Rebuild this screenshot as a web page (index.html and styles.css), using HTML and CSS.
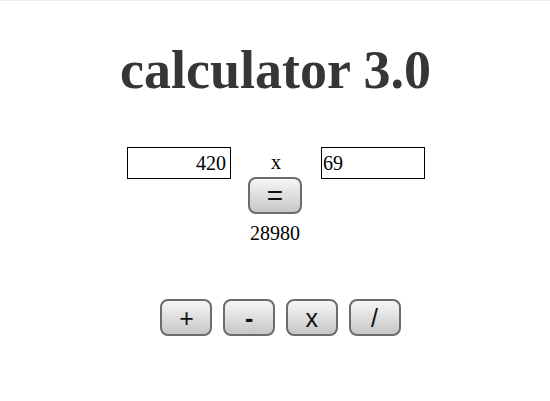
FILE: index.html
```html
<!DOCTYPE html>
<html>
<head>
<meta charset="utf-8">
<link rel="stylesheet" href="styles.css">
</head>
<body>
<div class="page">
  <h1 class="title">calculator 3.0</h1>
  <div class="operands">
    <input class="field field-left" type="text" value="420">
    <span class="op">x</span>
    <input class="field field-right" type="text" value="69">
  </div>
  <div class="equals-row">
    <button class="btn btn-equals">=</button>
  </div>
  <div class="result">28980</div>
  <div class="ops">
    <button class="btn btn-op">+</button>
    <button class="btn btn-op btn-minus">-</button>
    <button class="btn btn-op">x</button>
    <button class="btn btn-op">/</button>
  </div>
</div>
</body>
</html>
```

FILE: styles.css
```css
html, body {
  margin: 0;
  padding: 0;
  background: #ffffff;
}
body {
  border-top: 1px solid #ececec;
  font-family: "Liberation Serif", "Times New Roman", serif;
  color: #000;
}
.page {
  display: flex;
  flex-direction: column;
  align-items: center;
}
.title {
  margin: 38px 0 0 0;
  font-size: 54px;
  line-height: 62px;
  font-weight: bold;
  color: #363636;
  font-family: "Liberation Serif", "Times New Roman", serif;
  padding-left: 1px;
}
.operands {
  margin-top: 46px;
  display: flex;
  align-items: flex-start;
  padding-left: 2px;
}
.field {
  box-sizing: border-box;
  width: 104px;
  height: 32px;
  border: 1px solid #000;
  margin: 0;
  font-family: "Liberation Serif", "Times New Roman", serif;
  font-size: 20px;
  color: #000;
  background: #fff;
  outline: none;
}
.field-left {
  text-align: right;
  padding: 0 4px 0 2px;
}
.field-right {
  text-align: left;
  padding: 0 2px 0 1px;
}
.op {
  width: 90px;
  text-align: center;
  font-size: 20px;
  line-height: 20px;
  padding-top: 5px;
}
.equals-row {
  margin-top: -2px;
  display: flex;
  justify-content: center;
}
.btn {
  box-sizing: border-box;
  border: 2px solid #6c6c6c;
  border-radius: 8px;
  background: linear-gradient(#f6f6f6, #dcdcdc 55%, #c6c6c6);
  font-family: "Liberation Sans", Arial, sans-serif;
  color: #111;
  padding: 0;
  margin: 0;
  display: flex;
  align-items: center;
  justify-content: center;
}
.btn-equals {
  width: 54px;
  height: 37px;
  font-size: 28px;
  line-height: 1;
}
.result {
  margin-top: 8px;
  font-size: 20px;
  line-height: 23px;
}
.ops {
  margin-top: 54px;
  display: flex;
  gap: 10.7px;
  padding-left: 11px;
}
.btn-op {
  width: 52px;
  height: 37px;
  font-size: 25px;
  line-height: 1;
  padding-top: 1px;
}
.btn-minus {
  font-weight: bold;
}
```
